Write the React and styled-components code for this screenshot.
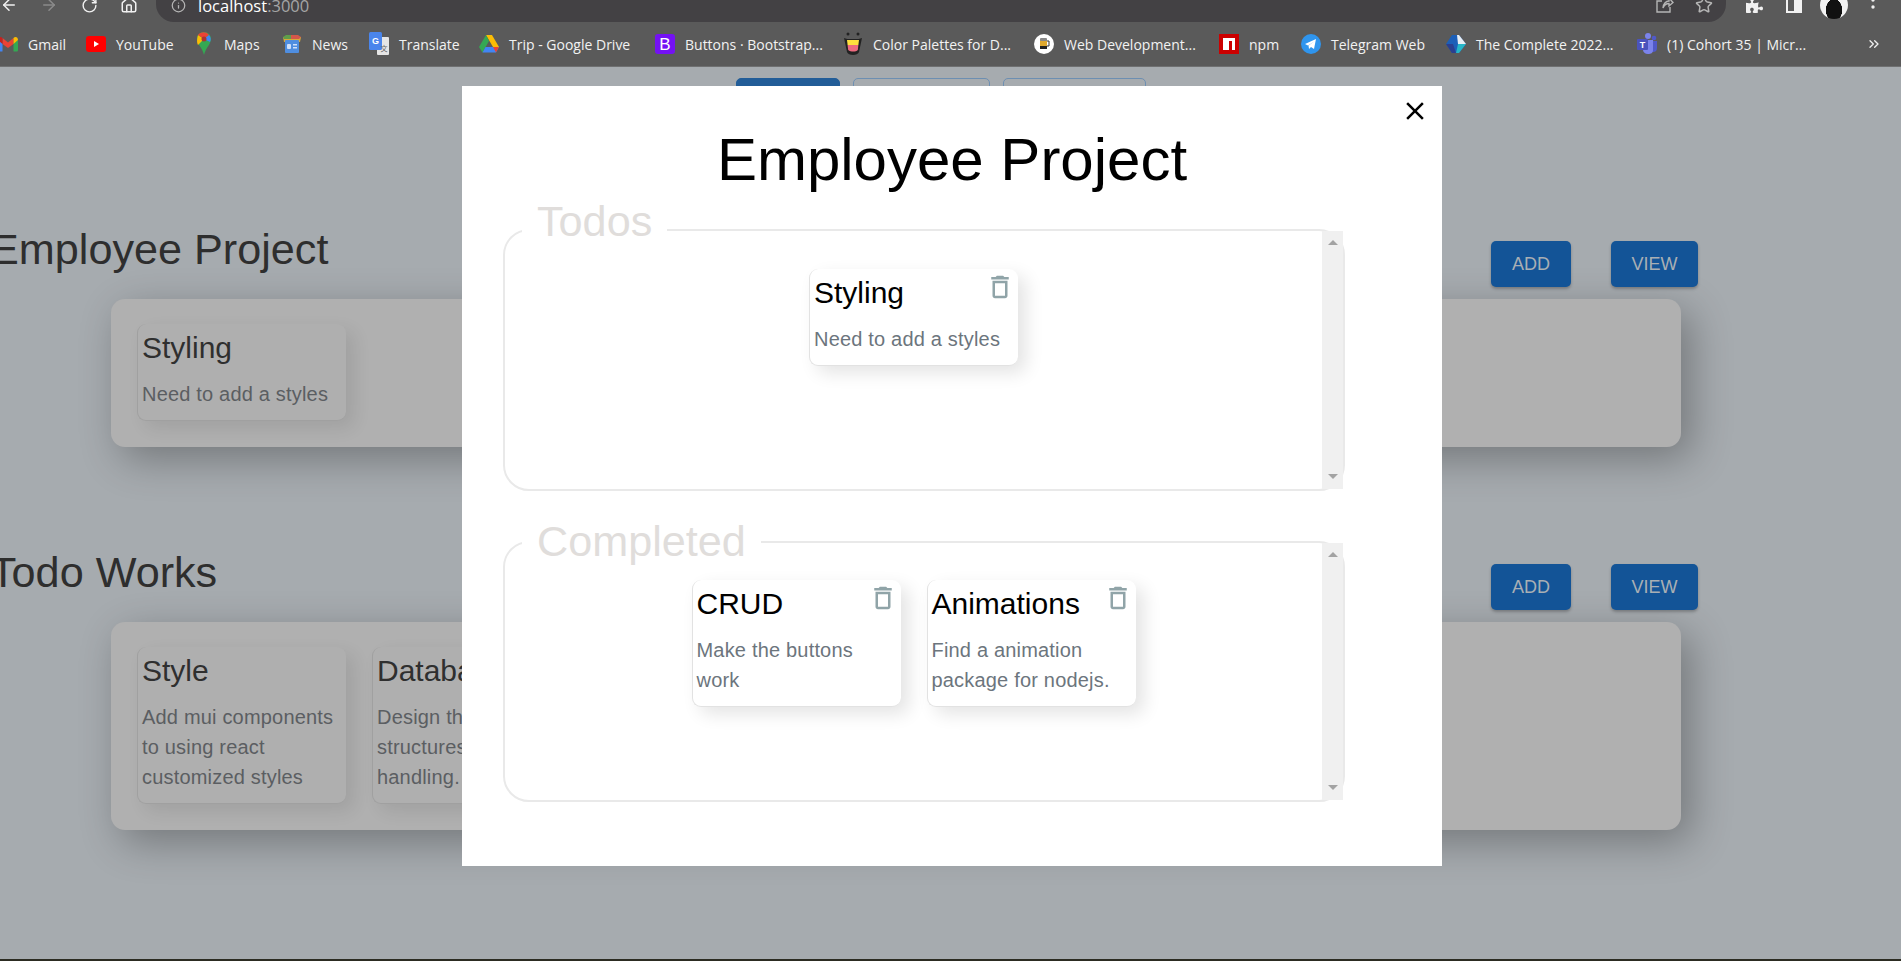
import React from 'react'
import styled, { createGlobalStyle } from 'styled-components'
import { ArrowLeft, ArrowRight, RotateCw, Home, Info, Star, ChevronsRight } from 'lucide-react'
import { FaPuzzlePiece } from 'react-icons/fa'

const GlobalStyle = createGlobalStyle`
  html, body {
    margin: 0;
    padding: 0;
    height: 100%;
    overflow: hidden;
    background: #a6abaf;
    font-family: "Liberation Sans", Arial, sans-serif;
  }
  * { box-sizing: border-box; }
`

const Screen = styled.div`
  width: 1901px;
  height: 961px;
  display: flex;
  flex-direction: column;
  position: relative;
  overflow: hidden;
`
const Toolbar = styled.div`
  height: 22px;
  flex: none;
  background: #5a5a5a;
  display: flex;
  align-items: center;
  padding: 0 0 12px 0;
  color: #f1f1f1;
`
const NavIcon = styled.span`
  width: 18px;
  height: 18px;
  flex: none;
  display: flex;
  align-items: center;
  justify-content: center;
  margin-left: ${p => p.$left}px;
  color: ${p => p.$color || '#f1f1f1'};
`
const Omnibox = styled.div`
  align-self: flex-start;
  height: 22px;
  width: 1570px;
  margin-left: 18px;
  padding: 0 0 12px 15px;
  flex: none;
  display: flex;
  align-items: center;
  background: #434144;
  border-radius: 0 0 18px 18px;
  color: #b5b5b5;
`
const Url = styled.span`
  margin-left: 12px;
  font-family: "Open Sans", sans-serif;
  font-size: 16.5px;
  color: #a5a5a5;
  white-space: nowrap;
  b {
    font-weight: 400;
    color: #fff;
  }
`
const OmniActions = styled.div`
  margin-left: auto;
  margin-right: 13px;
  display: flex;
  gap: 21px;
  align-items: center;
`
const Avatar = styled.span`
  width: 28px;
  height: 28px;
  margin-left: 17px;
  flex: none;
  border-radius: 50%;
  background: radial-gradient(ellipse at 50% 68%, #111 0 40%, #f2f2f2 42%);
`
const Bookmarks = styled.div`
  height: 45px;
  flex: none;
  background: #5a5a5a;
  border-bottom: 1px solid #6f7071;
  display: flex;
  align-items: center;
  margin-left: -2px;
`
const Bookmark = styled.div`
  display: flex;
  align-items: center;
  gap: 10px;
  margin-right: 21px;
  flex: none;
`
const BookmarkLabel = styled.span`
  width: ${p => p.$w}px;
  font-family: "Open Sans", sans-serif;
  font-size: 14px;
  color: #f2f2f2;
  white-space: nowrap;
`
const Chevrons = styled.span`
  margin-left: auto;
  margin-right: 19px;
  color: #eee;
  display: flex;
`
const Page = styled.main`
  flex: 1;
  min-height: 0;
  overflow: hidden;
  background: #a6abaf;
`
const TopTabs = styled.div`
  display: flex;
  gap: 13px;
  padding: 11px 0 0 736px;
`
const TopTab = styled.div`
  width: ${p => p.$w}px;
  height: 46px;
  border-radius: 5px;
  background: ${p => (p.$filled ? '#225d98' : 'transparent')};
  border: 1px solid ${p => (p.$filled ? '#225d98' : '#6d8fb2')};
`
const Section = styled.section`
  margin-top: 100px;
`
const SectionHead = styled.div`
  display: flex;
  align-items: flex-start;
  margin-left: -10px;
  padding-right: 203px;
`
const SectionTitle = styled.h2`
  margin: 1px 0 0;
  font-size: 43.2px;
  line-height: 48px;
  font-weight: 400;
  color: #2e2e2e;
  white-space: nowrap;
`
const Actions = styled.div`
  margin-left: auto;
  margin-top: 17px;
  display: flex;
  gap: 40px;
`
const ActionButton = styled.div`
  height: 46px;
  width: ${p => p.$w}px;
  display: flex;
  align-items: center;
  justify-content: center;
  border-radius: 5px;
  background: #135497;
  color: #a9afb4;
  font-size: 18px;
  box-shadow: 0 2px 3px rgba(0, 0, 0, .25);
`
const Panel = styled.div`
  width: 1570px;
  margin: 12px 0 0 111px;
  padding: 25px 26px 26px;
  display: flex;
  gap: 26px;
  background: #b0b0b0;
  border-radius: 14px;
  box-shadow: 10px 12px 40px rgba(0, 0, 0, .3);
`
const Card = styled.article`
  width: 209px;
  flex: none;
  padding: 5px 3px 11px 4px;
  border-radius: 9px;
  border-left: 1px solid ${p => (p.$dim ? '#a0a0a0' : '#e2e2e2')};
  border-bottom: 1px solid ${p => (p.$dim ? '#a0a0a0' : '#e2e2e2')};
  background: ${p => (p.$dim ? '#afafaf' : '#fff')};
  box-shadow: ${p => (p.$dim
    ? '8px 7px 18px rgba(0, 0, 0, .09)'
    : '8px 7px 18px rgba(0, 0, 0, .11)')};
`
const CardHead = styled.div`
  display: flex;
  justify-content: space-between;
  align-items: flex-start;
`
const CardTitle = styled.h3`
  margin: 0 0 13px;
  font-size: 30px;
  line-height: 37px;
  font-weight: 400;
  white-space: nowrap;
  color: ${p => (p.$dim ? '#2f2f2f' : '#000')};
`
const TrashIcon = styled.svg`
  width: 30px;
  height: 30px;
  margin-top: -2px;
  fill: #90a4a8;
  flex: none;
`
const CardText = styled.p`
  margin: 0;
  font-size: 20px;
  line-height: 30px;
  letter-spacing: .00938em;
  color: ${p => (p.$dim ? '#5b5e62' : '#6c757d')};
`
const Modal = styled.div`
  position: absolute;
  left: 462px;
  top: 86px;
  width: 980px;
  height: 780px;
  padding: 38px 0 0 41px;
  background: #fff;
`
const CloseIcon = styled.svg`
  position: absolute;
  top: 10px;
  right: 12px;
  width: 30px;
  height: 30px;
  fill: #000;
`
const ModalTitle = styled.h1`
  margin: 0 0 1px -41px;
  font-size: 60px;
  line-height: 72px;
  font-weight: 400;
  text-align: center;
  color: #000;
`
const Group = styled.fieldset`
  width: 842px;
  min-width: 842px;
  margin: ${p => p.$top}px 0 0;
  padding: 0;
  border: 2px solid #e9e9e9;
  border-radius: 26px;
`
const GroupLegend = styled.legend`
  margin-left: 17px;
  padding: 0 ${p => p.$right}px ${p => p.$drop}px 15px;
  font-size: 43.2px;
  line-height: 48px;
  color: #e0dddb;
`
const GroupBody = styled.div`
  position: relative;
  height: ${p => p.$height}px;
  padding: ${p => p.$pad}px 21px 0 0;
  display: flex;
  justify-content: center;
  align-items: flex-start;
  gap: 26px;
`
const Scrollbar = styled.div`
  position: absolute;
  right: 0;
  top: ${p => p.$top}px;
  bottom: 0;
  width: 21px;
  background: #f0f0f0;
  display: flex;
  flex-direction: column;
  justify-content: space-between;
  align-items: center;
  padding: 9px 0 10px;
`
const Arrow = styled.span`
  width: 0;
  height: 0;
  border-left: 5px solid transparent;
  border-right: 5px solid transparent;
  border-bottom: ${p => (p.$down ? '0' : '5px solid #a3a3a3')};
  border-top: ${p => (p.$down ? '5px solid #a3a3a3' : '0')};
`
const BottomEdge = styled.div`
  height: 2px;
  flex: none;
  background: #2c2c22;
`

const Gmail = () => (
  <svg width="20" height="16" viewBox="0 0 20 16">
    <path d="M0 4v10c0 1 .6 1.600 1.500 1.600H4.500V7.500z" fill="#4285f4" />
    <path d="M20 4v10c0 1-.6 1.600-1.500 1.600H15.500V7.500z" fill="#34a853" />
    <path d="M4.500 8V2L10 6.500 15.500 2v6L10 12z" fill="#ea4335" />
    <path d="M0 4c0-3 2.800-3.800 4.500-2v6z" fill="#c5221f" />
    <path d="M20 4c0-3-2.800-3.800-4.500-2v6z" fill="#fbbc04" />
  </svg>
)
const YouTube = () => (
  <svg width="20" height="16" viewBox="0 0 20 16">
    <rect width="20" height="16" y="0" rx="3" fill="#f00" />
    <path d="M8 5l5 3-5 3z" fill="#fff" />
  </svg>
)
const Maps = () => (
  <svg width="20" height="24" viewBox="0 0 20 24">
    <path d="M10 0c4 0 7 3 7 7 0 5-5 8-7 16C8 15 3 12 3 7c0-4 3-7 7-7z" fill="#34a853" />
    <path d="M4 3l6 4-6 6c-1-2-1.500-4 0-10z" fill="#fbbc04" />
    <path d="M4 3c2-3 8-4 11 0l-5 4z" fill="#ea4335" />
    <path d="M15 3c2 2 2 5 1 7l-6-3z" fill="#4285f4" />
    <circle cx="10" cy="7" r="2.500" fill="#a33" />
  </svg>
)
const News = () => (
  <svg width="20" height="20" viewBox="0 0 20 20">
    <path d="M1 3h18l-1 5H2z" fill="#d8a93a" />
    <path d="M1 3l3-2h5v4H2z" fill="#5f9e4a" />
    <path d="M9 1h7l3 2-2 2H9z" fill="#d5574a" />
    <rect x="3" y="6" width="14" height="13" rx="1" fill="#4f8ee0" />
    <rect x="5" y="10" width="4" height="5" rx="1" fill="#cfe0fa" />
    <rect x="11" y="10" width="4" height="1.500" fill="#cfe0fa" />
    <rect x="11" y="13" width="4" height="1.500" fill="#cfe0fa" />
  </svg>
)
const Translate = () => (
  <svg width="20" height="24" viewBox="0 0 20 24">
    <rect x="8" y="5" width="12" height="18" rx="1" fill="#e6e6e6" />
    <rect x="0" y="0" width="13" height="18" rx="1.500" fill="#4a85ec" />
    <text x="6.500" y="12" fontSize="9" fontWeight="700" fill="#fff" textAnchor="middle" fontFamily="Liberation Sans">G</text>
    <text x="15" y="19" fontSize="7" fill="#666" textAnchor="middle" fontFamily="Noto Sans CJK SC">文</text>
  </svg>
)
const Drive = () => (
  <svg width="20" height="18" viewBox="0 0 20 18">
    <path d="M7 0h6l7 12h-6z" fill="#fbbc04" />
    <path d="M7 0l3 6-6.500 11.500L0 12z" fill="#34a853" />
    <path d="M6.500 12H20l-3 5.500H3.500z" fill="#4285f4" />
    <path d="M14 12h6l-3 5.500z" fill="#ea4335" />
  </svg>
)
const Bootstrap = () => (
  <svg width="20" height="24" viewBox="0 0 20 24">
    <rect y="2" width="20" height="20" rx="3" fill="#7411f4" />
    <text x="10" y="18" fontSize="17" fill="#fff" textAnchor="middle" fontFamily="Liberation Sans">B</text>
  </svg>
)
const Palette = () => (
  <svg width="20" height="24" viewBox="0 0 20 24">
    <circle cx="5" cy="2" r="1.500" fill="#222" />
    <circle cx="15" cy="2" r="1.500" fill="#222" />
    <path d="M1 6c2 1 4 1 9 1s7 0 9-1l-3 14c-1 4-11 4-12 0z" fill="#222" />
    <path d="M4 8h12l-.6 5H4.600z" fill="#ffe03d" />
    <path d="M4.600 13h10.800l-.6 5c-2 2-7 2-9.600 0z" fill="#ee6a7f" />
  </svg>
)
const Beer = () => (
  <svg width="20" height="24" viewBox="0 0 20 24">
    <circle cx="10" cy="12" r="10" fill="#fff" />
    <rect x="6" y="7" width="7" height="10" rx="1" fill="#e0a92e" />
    <rect x="6" y="6" width="7" height="3" rx="1" fill="#888" />
    <path d="M13 9h2v5h-2" fill="none" stroke="#333" strokeWidth="1" />
    <rect x="6" y="14" width="7" height="3" fill="#222" />
  </svg>
)
const Npm = () => (
  <svg width="20" height="24" viewBox="0 0 20 24">
    <rect y="2" width="20" height="20" fill="#c00" />
    <path d="M4 6h12v12h-3V9h-3v9H4z" fill="#fff" />
  </svg>
)
const Telegram = () => (
  <svg width="20" height="24" viewBox="0 0 20 24">
    <circle cx="10" cy="12" r="10" fill="#2f95ee" />
    <path d="M4 12l11-5-2 10-3-2-2 2-.5-3.500L14 9l-7 4.500z" fill="#fff" />
  </svg>
)
const Complete = () => (
  <svg width="20" height="24" viewBox="0 0 20 24">
    <path d="M6 3h7l7 9-7 9H6l-6-9z" fill="#1c5fb8" />
    <path d="M11 3h2l7 9h-8z" fill="#e8eef4" />
    <path d="M20 12l-7 9h-3l2-9z" fill="#27b6c8" />
    <path d="M0 12l6 9h4l-3-9z" fill="#2b3f8f" />
  </svg>
)
const Teams = () => (
  <svg width="20" height="24" viewBox="0 0 20 24">
    <circle cx="11" cy="4" r="3" fill="#7b83eb" />
    <circle cx="17" cy="6" r="2.300" fill="#5059c9" />
    <path d="M14 9h6v7c0 3-2 4-4 4h-2z" fill="#5059c9" />
    <path d="M6 8h10v10c0 3-2 4-5 4-3 0-5-2-5-4z" fill="#7b83eb" />
    <rect x="0" y="7" width="11" height="11" rx="1" fill="#4b53bc" />
    <text x="5.500" y="16" fontSize="9" fontWeight="700" fill="#fff" textAnchor="middle" fontFamily="Liberation Sans">T</text>
  </svg>
)

const BOOKMARKS = [
  { Icon: Gmail, label: 'Gmail', w: 37 },
  { Icon: YouTube, label: 'YouTube', w: 57 },
  { Icon: Maps, label: 'Maps', w: 37 },
  { Icon: News, label: 'News', w: 36 },
  { Icon: Translate, label: 'Translate', w: 59 },
  { Icon: Drive, label: 'Trip - Google Drive', w: 125 },
  { Icon: Bootstrap, label: 'Buttons · Bootstrap...', w: 137 },
  { Icon: Palette, label: 'Color Palettes for D...', w: 140 },
  { Icon: Beer, label: 'Web Development...', w: 134 },
  { Icon: Npm, label: 'npm', w: 31 },
  { Icon: Telegram, label: 'Telegram Web', w: 94 },
  { Icon: Complete, label: 'The Complete 2022...', w: 140 },
  { Icon: Teams, label: '(1) Cohort 35 | Micr...', w: 139 }
]

const BACK_SECTIONS = [
  {
    title: 'Employee Project',
    cards: [{ title: 'Styling', text: 'Need to add a styles' }]
  },
  {
    title: 'Todo Works',
    cards: [
      { title: 'Style', text: 'Add mui components to using react customized styles' },
      { title: 'Database', text: 'Design the data structures and error handling.' }
    ]
  }
]

const Trash = () => (
  <TrashIcon viewBox="0 0 24 24">
    <path d="M6 19c0 1.100.9 2 2 2h8c1.100 0 2-.9 2-2V7H6v12zM8 9h8v10H8V9zm7.500-5l-1-1h-5l-1 1H5v2h14V4h-3.500z" />
  </TrashIcon>
)

const TodoCard = ({ title, text, dim }) => (
  <Card $dim={dim}>
    <CardHead>
      <CardTitle $dim={dim}>{title}</CardTitle>
      {!dim && <Trash />}
    </CardHead>
    <CardText $dim={dim}>{text}</CardText>
  </Card>
)

const BoardSection = ({ title, cards }) => (
  <Section>
    <SectionHead>
      <SectionTitle>{title}</SectionTitle>
      <Actions>
        <ActionButton $w={80}>ADD</ActionButton>
        <ActionButton $w={87}>VIEW</ActionButton>
      </Actions>
    </SectionHead>
    <Panel>
      {cards.map(c => <TodoCard key={c.title} {...c} dim />)}
    </Panel>
  </Section>
)

const ModalGroup = ({ legend, right, drop, top, height, pad, barTop, cards }) => (
  <Group $top={top}>
    <GroupLegend $right={right} $drop={drop}>{legend}</GroupLegend>
    <GroupBody $height={height} $pad={pad}>
      {cards.map(c => <TodoCard key={c.title} {...c} />)}
      <Scrollbar $top={barTop}>
        <Arrow />
        <Arrow $down />
      </Scrollbar>
    </GroupBody>
  </Group>
)

export default function App() {
  return (
    <Screen>
      <GlobalStyle />
      <Toolbar>
        <NavIcon $left={0}><ArrowLeft size={20} /></NavIcon>
        <NavIcon $left={22} $color="#8b8b8b"><ArrowRight size={20} /></NavIcon>
        <NavIcon $left={22}><RotateCw size={17} /></NavIcon>
        <NavIcon $left={22}><Home size={18} /></NavIcon>
        <Omnibox>
          <Info size={15} />
          <Url><b>localhost</b>:3000</Url>
          <OmniActions>
            <svg width="20" height="20" viewBox="0 0 20 20" fill="none" stroke="#b5b5b5" strokeWidth="1.400">
              <path d="M16 12v5H3V6h5M9 13c0-4 3-7 6-7V3l4 4.500L15 11V8.500c-3 0-5 2-6 4.500z" />
            </svg>
            <Star size={18} />
          </OmniActions>
        </Omnibox>
        <NavIcon $left={19}><FaPuzzlePiece size={17} /></NavIcon>
        <NavIcon $left={22}>
          <svg width="18" height="18" viewBox="0 0 18 18">
            <path d="M1 1h16v16H1zM3 3v12h6V3z" fill="#f1f1f1" fillRule="evenodd" />
          </svg>
        </NavIcon>
        <Avatar />
        <NavIcon $left={16}>
          <svg width="4" height="18" viewBox="0 0 4 18" fill="#f1f1f1">
            <circle cx="2" cy="4" r="1.700" />
            <circle cx="2" cy="11" r="1.700" />
          </svg>
        </NavIcon>
      </Toolbar>
      <Bookmarks>
        {BOOKMARKS.map(({ Icon, label, w }) => (
          <Bookmark key={label}>
            <Icon />
            <BookmarkLabel $w={w}>{label}</BookmarkLabel>
          </Bookmark>
        ))}
        <Chevrons><ChevronsRight size={16} /></Chevrons>
      </Bookmarks>
      <Page>
        <TopTabs>
          <TopTab $w={104} $filled />
          <TopTab $w={137} />
          <TopTab $w={143} />
        </TopTabs>
        {BACK_SECTIONS.map(s => <BoardSection key={s.title} {...s} />)}
      </Page>
      <BottomEdge />
      <Modal>
        <CloseIcon viewBox="0 0 24 24">
          <path d="M19 6.410 17.590 5 12 10.590 6.410 5 5 6.410 10.590 12 5 17.590 6.410 19 12 13.410 17.590 19 19 17.590 13.410 12z" />
        </CloseIcon>
        <ModalTitle>Employee Project</ModalTitle>
        <ModalGroup
          legend="Todos"
          right={15}
          drop={17}
          top={0}
          height={227}
          pad={7}
          barTop={-31}
          cards={[{ title: 'Styling', text: 'Need to add a styles' }]}
        />
        <ModalGroup
          legend="Completed"
          right={15}
          drop={2}
          top={26}
          height={233}
          pad={13}
          barTop={-24}
          cards={[
            { title: 'CRUD', text: 'Make the buttons work' },
            { title: 'Animations', text: 'Find a animation package for nodejs.' }
          ]}
        />
      </Modal>
    </Screen>
  )
}
